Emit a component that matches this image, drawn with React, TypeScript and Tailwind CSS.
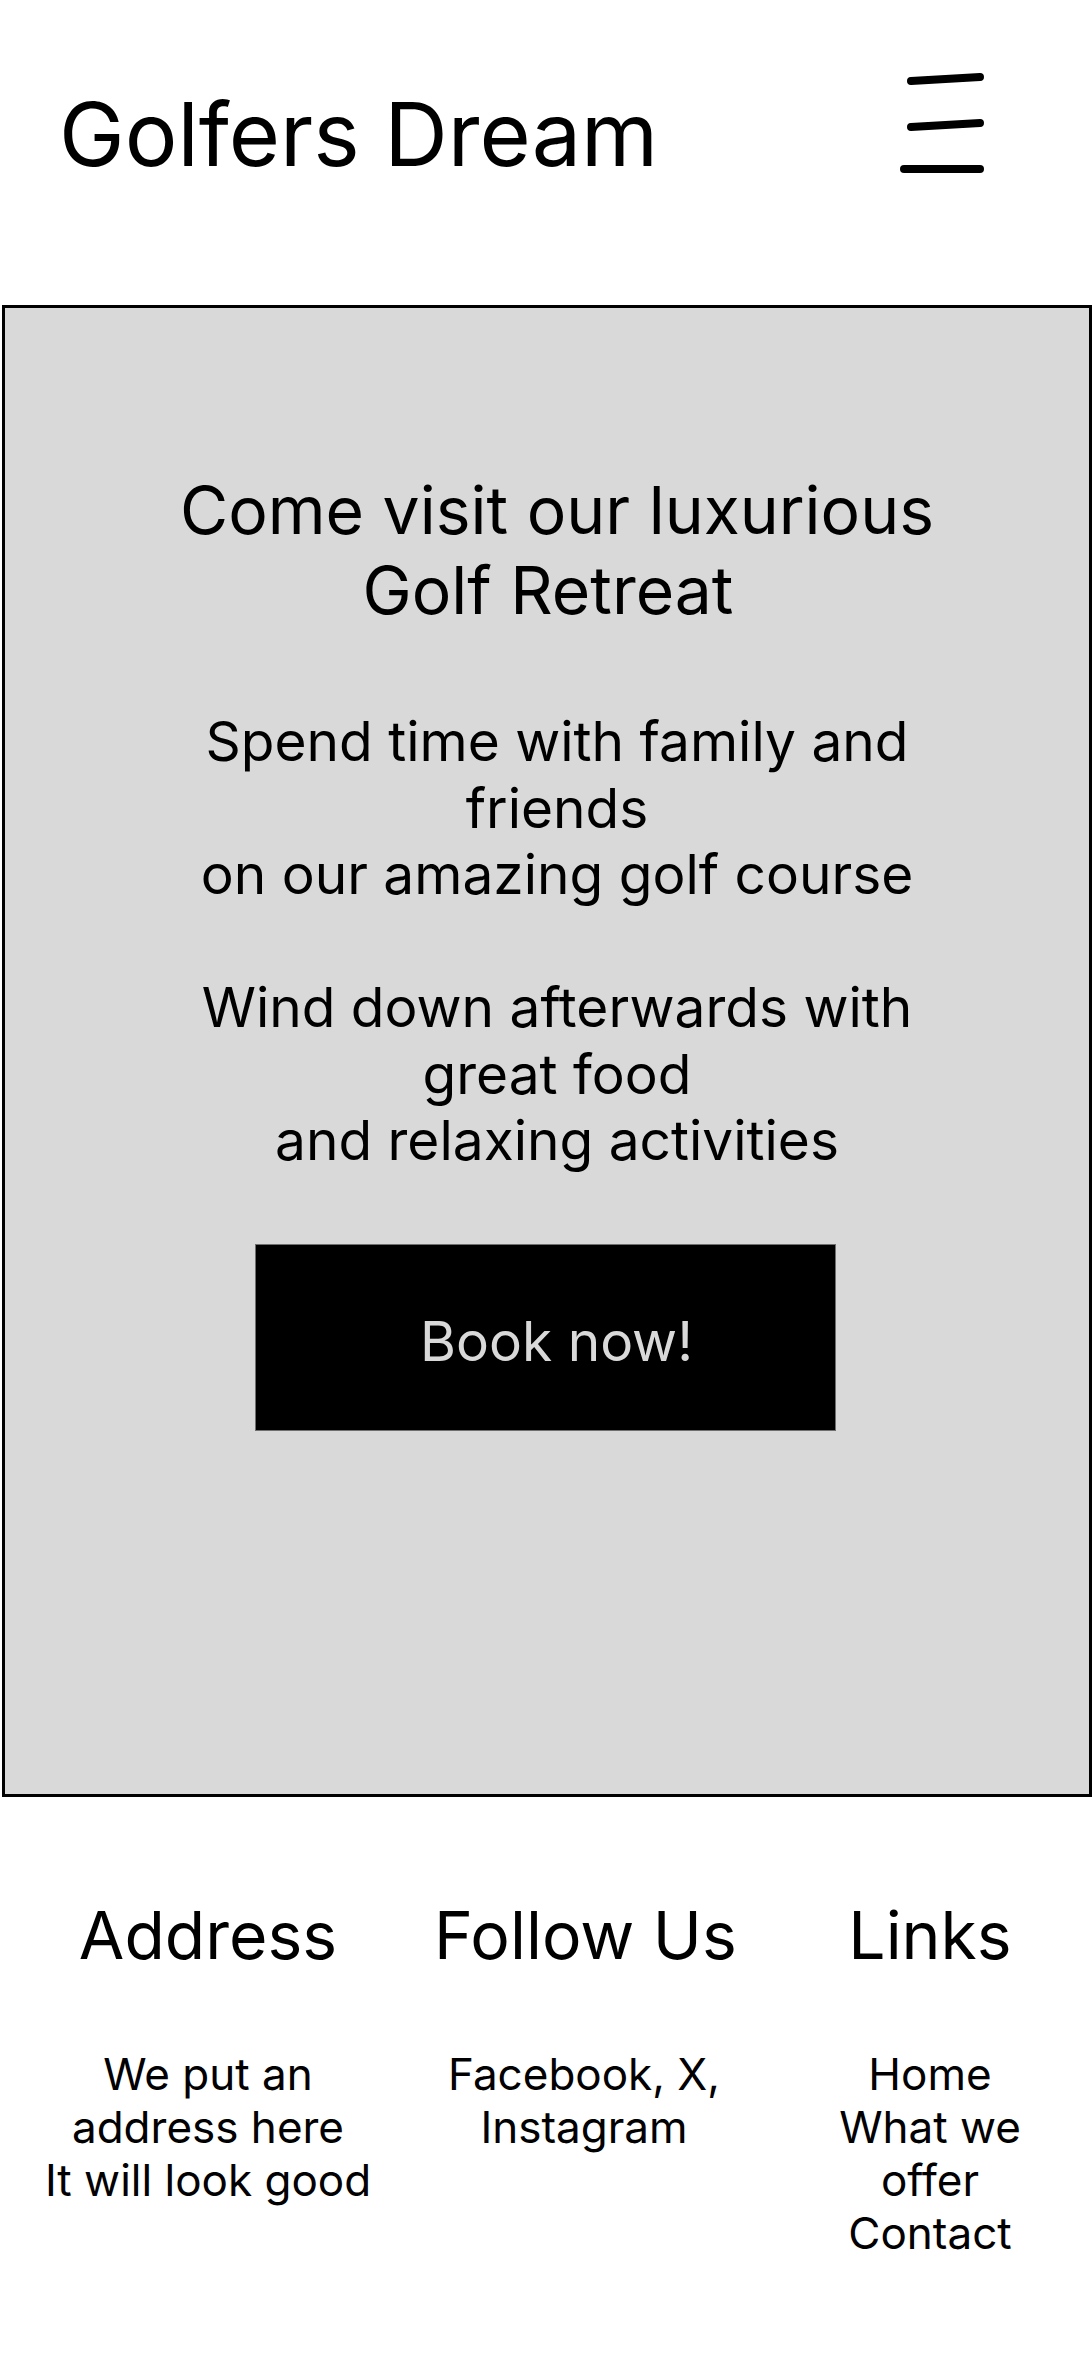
export default function App() {
  return (
    <div className="min-h-[2367px] w-[1092px] bg-white text-black font-['Inter',sans-serif]">
      {/* Header */}
      <header className="flex h-[305px] items-start justify-between">
        <h1 className="ml-[59px] mt-[81px] text-[88px] font-normal leading-[106px]">Golfers Dream</h1>
        <button aria-label="Menu" className="mr-[102px] mt-[60px]">
          <svg width="100" height="120" viewBox="0 0 100 120" fill="none" stroke="black" strokeWidth={8} strokeLinecap="round">
            <path d="M21 21 L90 17" />
            <path d="M21 67 L90 63" />
            <path d="M14 109 L90 109" />
          </svg>
        </button>
      </header>

      {/* Hero card */}
      <section className="ml-[2px] h-[1492px] w-[1090px] border-[3px] border-black bg-[#d9d9d9]">
        <div className="flex flex-col items-center pl-[20px] pt-[162px] text-center whitespace-nowrap">
          <h2 className="text-[66px] font-normal leading-[80px]">
            Come visit our luxurious
            <br />
            <span className="pr-[18px]">Golf Retreat</span>
          </h2>
          <p className="mt-[78px] text-[55px] leading-[66.5px]">
            Spend time with family and
            <br />
            friends
            <br />
            on our amazing golf course
            <br />
            <br />
            Wind down afterwards with
            <br />
            great food
            <br />
            and relaxing activities
          </p>
        </div>
        <button className="ml-[250px] mt-[70px] flex h-[187px] w-[581px] items-center justify-center border border-[#6f6f6f] bg-black pl-[22px] pt-[9px] text-[55px] leading-none text-[#d9d9d9]">
          Book now!
        </button>
      </section>

      {/* Footer */}
      <footer className="flex pl-[43px] pt-[98px] text-center whitespace-nowrap">
        <div className="w-[330px]">
          <h3 className="text-[66px] font-normal leading-[80px]">Address</h3>
          <p className="mt-[73px] text-[44px] leading-[53px]">
            We put an
            <br />
            address here
            <br />
            It will look good
          </p>
        </div>
        <div className="ml-[61px] w-[300px]">
          <h3 className="text-[66px] font-normal leading-[80px]">Follow Us</h3>
          <p className="mt-[73px] text-[44px] leading-[53px]">
            Facebook, X,
            <br />
            Instagram
          </p>
        </div>
        <div className="ml-[86px] w-[220px]">
          <h3 className="text-[66px] font-normal leading-[80px]">Links</h3>
          <ul className="mt-[73px] text-[44px] leading-[53px]">
            <li>Home</li>
            <li>
              What we
              <br />
              offer
            </li>
            <li>Contact</li>
          </ul>
        </div>
      </footer>
    </div>
  )
}
